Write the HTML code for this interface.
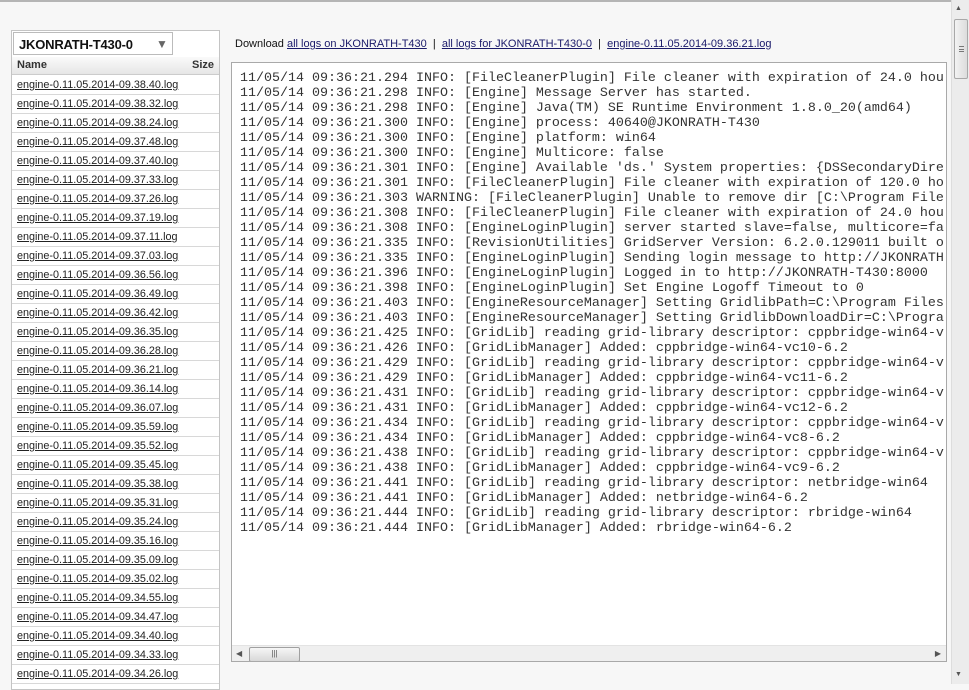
<!DOCTYPE html>
<html><head><meta charset="utf-8"><style>
*{margin:0;padding:0;box-sizing:border-box}
body{width:969px;height:684px;overflow:hidden;background:#f7f7f7;font-family:"Liberation Sans",Arial,sans-serif;position:relative}
.top{position:absolute;left:0;top:0;width:951px;height:3px;border-top:2px solid #b5b5b5}
.vs{position:absolute;left:951px;top:0;width:18px;height:684px;background:#ececec;border-left:1px solid #ddd}
.vs .th{position:absolute;left:2px;top:19px;width:14px;height:60px;background:linear-gradient(to right,#f3f3f3,#dcdcdc);border:1px solid #a8a8a8;border-radius:2px}
.vs .th i{position:absolute;left:4px;top:26px;width:5px;height:6px;border-top:1px solid #777;border-bottom:1px solid #777}
.vs .th i:after{content:"";position:absolute;left:0;top:2px;width:5px;border-top:1px solid #777}
.ua{position:absolute;left:955px;top:5px;font-size:7px;color:#555}
.da{position:absolute;left:955px;top:671px;font-size:7px;color:#555}
.left{position:absolute;left:11px;top:30px;width:209px;height:660px;background:#fff;border:1px solid #c4c4c4}
.dd{position:absolute;left:1px;top:1px;width:160px;height:23px;border:1px solid #bbb;background:#fff;font-weight:bold;font-size:13px;padding:4px 0 0 5px;color:#111;letter-spacing:-0.2px}
.dd span{position:absolute;left:142px;top:4px;font-size:12px;color:#666}
.hd{position:absolute;left:0;top:26px;width:207px;height:18px;background:linear-gradient(#fafafa,#e6e6e6);border-bottom:1px solid #ccc;font-size:11px;font-weight:bold;color:#333}
.hd b{position:absolute;left:5px;top:2px}.hd em{position:absolute;right:5px;top:2px;font-style:normal}
.rows{position:absolute;left:0;top:45px;width:207px}
.rows div{height:19px;border-bottom:1px solid #d8d8d8;font-size:10.8px;padding:3px 0 0 5px}
.rows a{color:#222;text-decoration:underline}
.dl{position:absolute;left:235px;top:38px;font-size:11px;color:#111}
.dl a{color:#1a1a6a;text-decoration:underline}
.log{position:absolute;left:231px;top:62px;width:716px;height:600px;background:#fff;border:1px solid #a9a9a9;overflow:hidden}
pre{position:absolute;left:8px;top:8px;font-family:"Liberation Mono","Courier New",monospace;font-size:13.33px;line-height:15px;color:#333;white-space:pre}
.hs{position:absolute;left:0;top:582px;width:714px;height:17px;background:#efefef;border-top:1px solid #e3e3e3}
.hs .th{position:absolute;left:17px;top:1px;width:51px;height:15px;background:linear-gradient(#f6f6f6,#d8d8d8);border:1px solid #a0a0a0;border-radius:2px;font-size:8px;text-align:center;color:#555;line-height:12px}
.hs .l{position:absolute;left:4px;top:3px;font-size:8px;color:#555}
.hs .r{position:absolute;right:5px;top:3px;font-size:8px;color:#555}
</style></head><body>
<div class="top"></div>
<div class="left">
<div class="dd">JKONRATH-T430-0<span>▼</span></div>
<div class="hd"><b>Name</b><em>Size</em></div>
<div class="rows">
<div><a>engine-0.11.05.2014-09.38.40.log</a></div>
<div><a>engine-0.11.05.2014-09.38.32.log</a></div>
<div><a>engine-0.11.05.2014-09.38.24.log</a></div>
<div><a>engine-0.11.05.2014-09.37.48.log</a></div>
<div><a>engine-0.11.05.2014-09.37.40.log</a></div>
<div><a>engine-0.11.05.2014-09.37.33.log</a></div>
<div><a>engine-0.11.05.2014-09.37.26.log</a></div>
<div><a>engine-0.11.05.2014-09.37.19.log</a></div>
<div><a>engine-0.11.05.2014-09.37.11.log</a></div>
<div><a>engine-0.11.05.2014-09.37.03.log</a></div>
<div><a>engine-0.11.05.2014-09.36.56.log</a></div>
<div><a>engine-0.11.05.2014-09.36.49.log</a></div>
<div><a>engine-0.11.05.2014-09.36.42.log</a></div>
<div><a>engine-0.11.05.2014-09.36.35.log</a></div>
<div><a>engine-0.11.05.2014-09.36.28.log</a></div>
<div><a>engine-0.11.05.2014-09.36.21.log</a></div>
<div><a>engine-0.11.05.2014-09.36.14.log</a></div>
<div><a>engine-0.11.05.2014-09.36.07.log</a></div>
<div><a>engine-0.11.05.2014-09.35.59.log</a></div>
<div><a>engine-0.11.05.2014-09.35.52.log</a></div>
<div><a>engine-0.11.05.2014-09.35.45.log</a></div>
<div><a>engine-0.11.05.2014-09.35.38.log</a></div>
<div><a>engine-0.11.05.2014-09.35.31.log</a></div>
<div><a>engine-0.11.05.2014-09.35.24.log</a></div>
<div><a>engine-0.11.05.2014-09.35.16.log</a></div>
<div><a>engine-0.11.05.2014-09.35.09.log</a></div>
<div><a>engine-0.11.05.2014-09.35.02.log</a></div>
<div><a>engine-0.11.05.2014-09.34.55.log</a></div>
<div><a>engine-0.11.05.2014-09.34.47.log</a></div>
<div><a>engine-0.11.05.2014-09.34.40.log</a></div>
<div><a>engine-0.11.05.2014-09.34.33.log</a></div>
<div><a>engine-0.11.05.2014-09.34.26.log</a></div>
</div>
</div>
<div class="dl">Download <a>all logs on JKONRATH-T430</a> &nbsp;| &nbsp;<a>all logs for JKONRATH-T430-0</a> &nbsp;| &nbsp;<a>engine-0.11.05.2014-09.36.21.log</a></div>
<div class="log"><pre>11/05/14 09:36:21.294 INFO: [FileCleanerPlugin] File cleaner with expiration of 24.0 hou
11/05/14 09:36:21.298 INFO: [Engine] Message Server has started.
11/05/14 09:36:21.298 INFO: [Engine] Java(TM) SE Runtime Environment 1.8.0_20(amd64)
11/05/14 09:36:21.300 INFO: [Engine] process: 40640@JKONRATH-T430
11/05/14 09:36:21.300 INFO: [Engine] platform: win64
11/05/14 09:36:21.300 INFO: [Engine] Multicore: false
11/05/14 09:36:21.301 INFO: [Engine] Available 'ds.' System properties: {DSSecondaryDire
11/05/14 09:36:21.301 INFO: [FileCleanerPlugin] File cleaner with expiration of 120.0 ho
11/05/14 09:36:21.303 WARNING: [FileCleanerPlugin] Unable to remove dir [C:\Program File
11/05/14 09:36:21.308 INFO: [FileCleanerPlugin] File cleaner with expiration of 24.0 hou
11/05/14 09:36:21.308 INFO: [EngineLoginPlugin] server started slave=false, multicore=fa
11/05/14 09:36:21.335 INFO: [RevisionUtilities] GridServer Version: 6.2.0.129011 built o
11/05/14 09:36:21.335 INFO: [EngineLoginPlugin] Sending login message to http://JKONRATH
11/05/14 09:36:21.396 INFO: [EngineLoginPlugin] Logged in to http://JKONRATH-T430:8000
11/05/14 09:36:21.398 INFO: [EngineLoginPlugin] Set Engine Logoff Timeout to 0
11/05/14 09:36:21.403 INFO: [EngineResourceManager] Setting GridlibPath=C:\Program Files
11/05/14 09:36:21.403 INFO: [EngineResourceManager] Setting GridlibDownloadDir=C:\Progra
11/05/14 09:36:21.425 INFO: [GridLib] reading grid-library descriptor: cppbridge-win64-v
11/05/14 09:36:21.426 INFO: [GridLibManager] Added: cppbridge-win64-vc10-6.2
11/05/14 09:36:21.429 INFO: [GridLib] reading grid-library descriptor: cppbridge-win64-v
11/05/14 09:36:21.429 INFO: [GridLibManager] Added: cppbridge-win64-vc11-6.2
11/05/14 09:36:21.431 INFO: [GridLib] reading grid-library descriptor: cppbridge-win64-v
11/05/14 09:36:21.431 INFO: [GridLibManager] Added: cppbridge-win64-vc12-6.2
11/05/14 09:36:21.434 INFO: [GridLib] reading grid-library descriptor: cppbridge-win64-v
11/05/14 09:36:21.434 INFO: [GridLibManager] Added: cppbridge-win64-vc8-6.2
11/05/14 09:36:21.438 INFO: [GridLib] reading grid-library descriptor: cppbridge-win64-v
11/05/14 09:36:21.438 INFO: [GridLibManager] Added: cppbridge-win64-vc9-6.2
11/05/14 09:36:21.441 INFO: [GridLib] reading grid-library descriptor: netbridge-win64
11/05/14 09:36:21.441 INFO: [GridLibManager] Added: netbridge-win64-6.2
11/05/14 09:36:21.444 INFO: [GridLib] reading grid-library descriptor: rbridge-win64
11/05/14 09:36:21.444 INFO: [GridLibManager] Added: rbridge-win64-6.2</pre>
<div class="hs"><span class="l">◀</span><div class="th">|||</div><span class="r">▶</span></div>
</div>
<div class="vs"><div class="th"><i></i></div></div>
<span class="ua">▲</span><span class="da">▼</span>
</body></html>
